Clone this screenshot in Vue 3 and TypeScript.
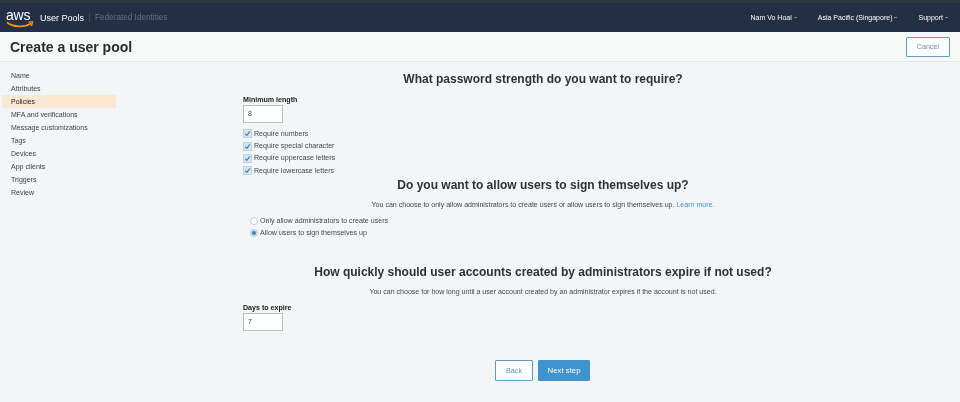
<script setup lang="ts">
const steps = [
  'Name',
  'Attributes',
  'Policies',
  'MFA and verifications',
  'Message customizations',
  'Tags',
  'Devices',
  'App clients',
  'Triggers',
  'Review',
];

const requirements = [
  'Require numbers',
  'Require special character',
  'Require uppercase letters',
  'Require lowercase letters',
];
</script>

<template>
  <div class="page">
    <header class="topbar">
      <div class="brand">
        <div class="logo">
          <span class="logo-text">aws</span>
          <svg class="smile" width="28" height="8" viewBox="0 0 28 8">
            <path d="M1 1.5C7 6 18 7 25 2.5" fill="none" stroke="#f90" stroke-width="1.6" />
            <path d="M22.5 1.2L26.6 1L25.4 5" fill="none" stroke="#f90" stroke-width="1.3" />
          </svg>
        </div>
        <span class="service">User Pools</span>
        <span class="service muted">Federated Identities</span>
      </div>
      <nav class="topnav">
        <span class="topnav-item">Nam Vo Hoai<i class="caret" /></span>
        <span class="topnav-item">Asia Pacific (Singapore)<i class="caret" /></span>
        <span class="topnav-item">Support<i class="caret" /></span>
      </nav>
    </header>

    <div class="titlebar">
      <h1>Create a user pool</h1>
      <button class="btn btn-outline cancel" type="button">Cancel</button>
    </div>

    <div class="body">
      <aside class="sidebar">
        <a v-for="step in steps" :key="step" class="step" :class="{ active: step === 'Policies' }">{{ step }}</a>
      </aside>

      <main class="content">
        <h2>What password strength do you want to require?</h2>
        <div class="form strength">
          <label class="field-label">Minimum length</label>
          <div class="input">8</div>
          <div class="checks">
            <label v-for="req in requirements" :key="req" class="check">
              <span class="checkbox">
                <svg width="9" height="9" viewBox="0 0 9 9">
                  <path d="M1.5 4.8L3.6 7L7.6 1.8" fill="none" stroke="#3a7fae" stroke-width="1.4" />
                </svg>
              </span>
              {{ req }}
            </label>
          </div>
        </div>

        <h2 class="second">Do you want to allow users to sign themselves up?</h2>
        <p class="desc">You can choose to only allow administrators to create users or allow users to sign themselves up. <a class="link">Learn more.</a></p>
        <div class="form radios">
          <label class="radio-row"><span class="radio" />Only allow administrators to create users</label>
          <label class="radio-row"><span class="radio on" />Allow users to sign themselves up</label>
        </div>

        <h2 class="third">How quickly should user accounts created by administrators expire if not used?</h2>
        <p class="desc desc-third">You can choose for how long until a user account created by an administrator expires if the account is not used.</p>
        <div class="form days">
          <label class="field-label">Days to expire</label>
          <div class="input">7</div>
        </div>

        <div class="actions">
          <button class="btn btn-outline" type="button">Back</button>
          <button class="btn btn-primary" type="button">Next step</button>
        </div>
      </main>
    </div>
  </div>
</template>

<style>
html,
body {
  margin: 0;
  background: #f2f6f6;
}
</style>

<style scoped>
.page {
  width: 960px;
  height: 402px;
  overflow: hidden;
  background: #f2f6f6;
  color: #333;
  font-family: "Liberation Sans", Arial, sans-serif;
  font-size: 7px;
  filter: blur(0.3px);
}

.topbar {
  height: 32px;
  box-sizing: border-box;
  border-top: 3px solid #2e3a3c;
  background: #232f45;
  display: flex;
  align-items: center;
  justify-content: space-between;
  padding: 0 12px 0 6px;
}

.brand {
  display: flex;
  align-items: center;
}

.logo {
  position: relative;
  width: 28px;
  height: 24px;
}

.logo-text {
  position: absolute;
  left: 0;
  top: 0;
  color: #fff;
  font-size: 14px;
  line-height: 18px;
  letter-spacing: -0.2px;
}

.smile {
  position: absolute;
  left: 0;
  top: 15px;
}

.service {
  color: #fff;
  font-size: 9px;
  margin-left: 6px;
}

.service.muted {
  color: #657184;
  font-size: 8.2px;
  margin-left: 5px;
  padding-left: 5px;
  border-left: 1px solid #3d4a5c;
}

.topnav {
  display: flex;
  gap: 21px;
}

.topnav-item {
  color: #fff;
  font-size: 7px;
  display: flex;
  align-items: center;
}

.caret {
  display: inline-block;
  width: 3px;
  height: 1px;
  margin-left: 2px;
  background: #7e8998;
}

.titlebar {
  height: 30px;
  box-sizing: border-box;
  background: #f7f9f9;
  border-bottom: 1px solid #e4e7e7;
  display: flex;
  align-items: center;
  justify-content: space-between;
  padding: 0 10px;
}

h1 {
  margin: 0;
  font-size: 14px;
  font-weight: 700;
  color: #2a2d2f;
}

.btn {
  box-sizing: border-box;
  font-family: inherit;
  font-size: 7.2px;
  border-radius: 1px;
  height: 21px;
  padding: 0;
  width: 38px;
}

.btn-outline {
  background: #fbfcfc;
  border: 1px solid #5d9cc4;
  color: #6d93b2;
}

.btn-primary {
  width: 52px;
  font-size: 7.8px;
  background: #3f93cf;
  border: 1px solid #3f93cf;
  color: #fff;
}

.cancel {
  width: 44px;
  height: 20px;
}

.body {
  display: flex;
}

.sidebar {
  width: 126px;
  flex-shrink: 0;
  padding: 7px 10px 0 2px;
  box-sizing: border-box;
}

.step {
  display: block;
  height: 13px;
  line-height: 13px;
  padding-left: 9px;
  color: #3c3f42;
  font-size: 7px;
}

.step.active {
  background: #fae8d3;
  color: #232629;
}

.content {
  flex: 1;
  min-width: 0;
  padding-top: 10px;
}

h2 {
  margin: 0;
  text-align: center;
  font-size: 12px;
  line-height: 15px;
  font-weight: 700;
  color: #2f3234;
}

.form {
  margin-left: 117px;
}

.strength {
  margin-top: 8px;
}

.field-label {
  display: block;
  font-size: 7.1px;
  font-weight: 700;
  line-height: 10px;
  color: #222;
}

.input {
  box-sizing: border-box;
  width: 40px;
  height: 18px;
  padding-left: 4px;
  line-height: 16px;
  border: 1px solid #b9bdbd;
  background: #fff;
  font-size: 7px;
  color: #444;
}

.checks {
  margin-top: 4.5px;
}

.check {
  display: flex;
  align-items: center;
  gap: 2px;
  height: 12.4px;
  font-size: 7.1px;
  color: #44474a;
}

.checkbox {
  box-sizing: border-box;
  width: 9px;
  height: 9px;
  display: flex;
  align-items: center;
  justify-content: center;
  background: #d5e5f1;
  border: 1px solid #bed2e0;
}

.second {
  margin-top: 0.5px;
}

.desc {
  margin: 7px 0 0;
  text-align: center;
  font-size: 7.05px;
  line-height: 10px;
  color: #44474a;
}

.link {
  color: #4a8fc0;
}

.radios {
  margin-top: 5px;
  margin-left: 124px;
}

.radio-row {
  display: flex;
  align-items: center;
  gap: 2px;
  height: 12.4px;
  font-size: 7.1px;
  color: #44474a;
}

.radio {
  box-sizing: border-box;
  width: 8px;
  height: 8px;
  border-radius: 50%;
  border: 1px solid #c6cacc;
  background: #fff;
}

.radio.on {
  border: 2px solid #c4d9e9;
  background: #3f86c0;
}

.third {
  margin-top: 26px;
}

.desc-third {
  margin-top: 7px;
}

.days {
  margin-top: 6px;
}

.actions {
  margin-top: 29px;
  padding-right: 1px;
  display: flex;
  justify-content: center;
  gap: 5px;
}
</style>
